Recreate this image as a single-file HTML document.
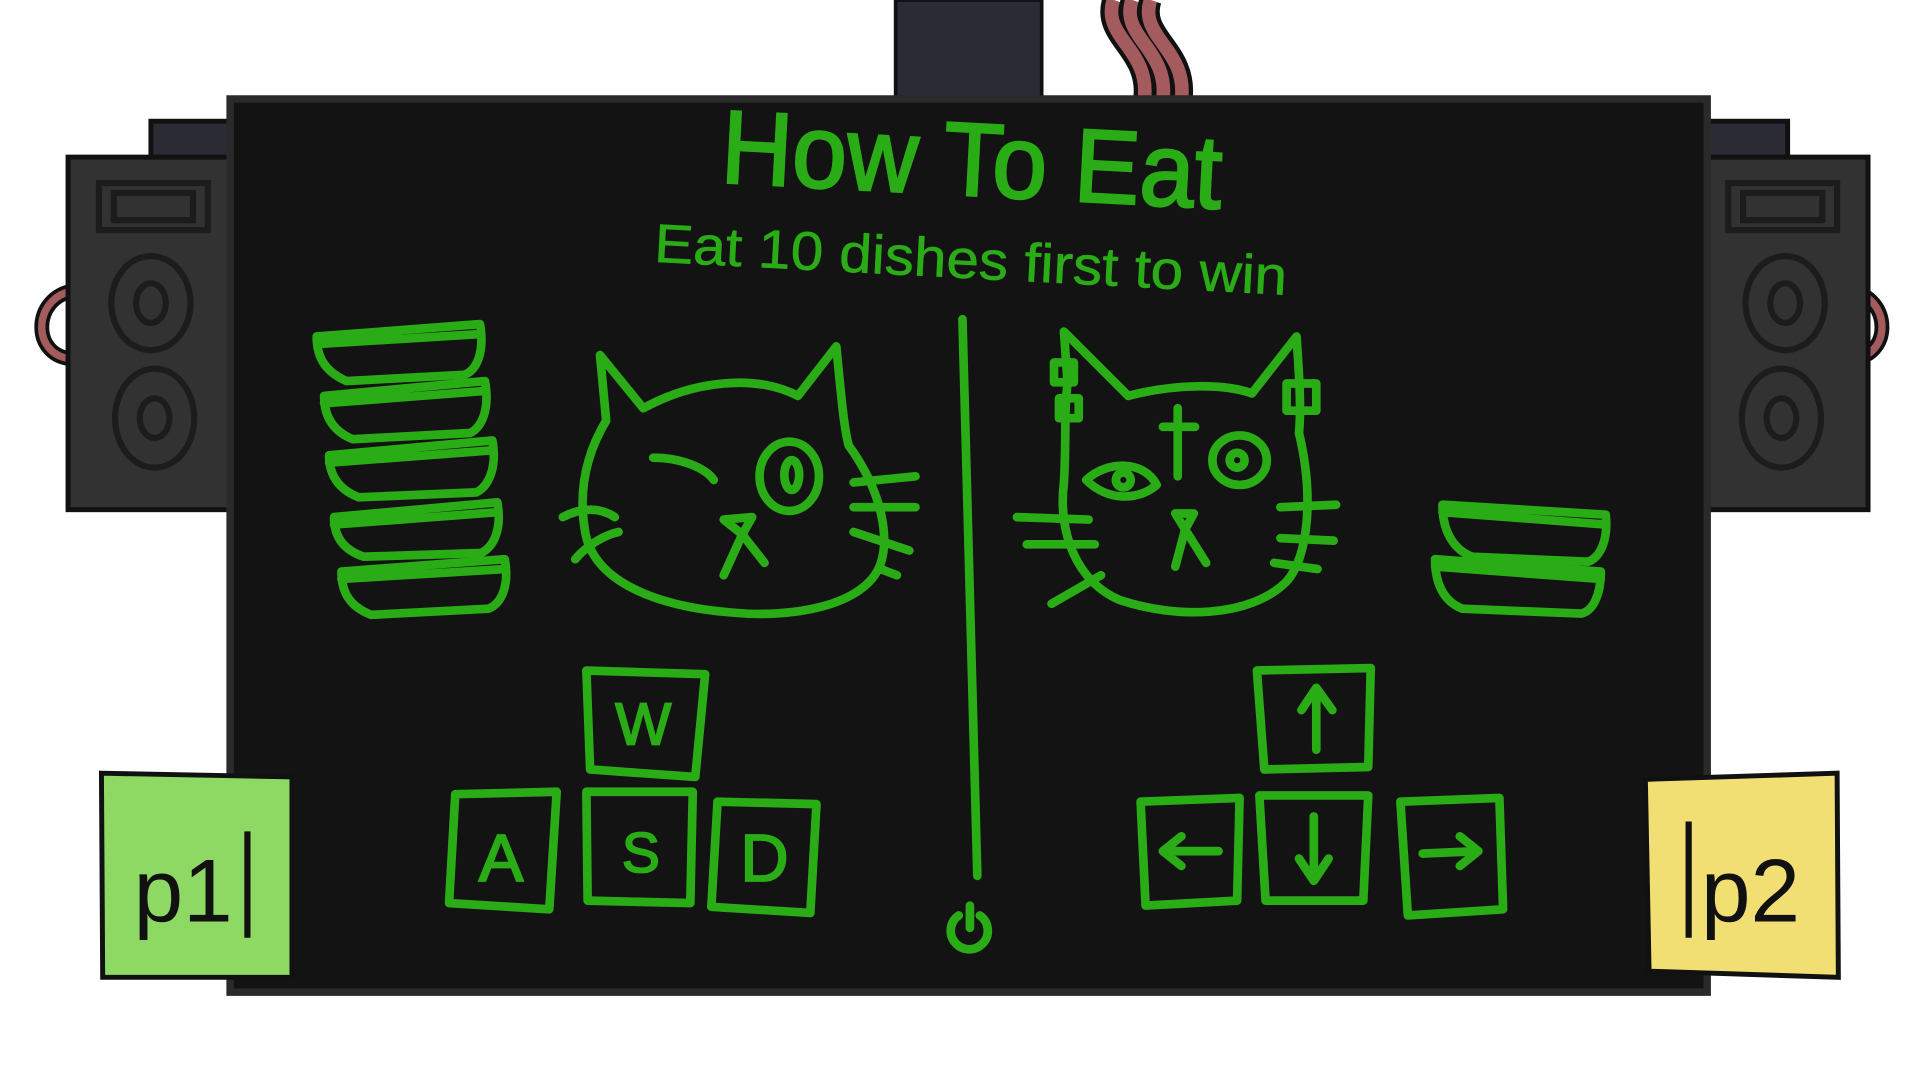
<!DOCTYPE html>
<html><head><meta charset="utf-8"><style>
html,body{margin:0;padding:0;background:#fff;width:1920px;height:1080px;overflow:hidden}
svg{display:block}
</style></head><body>
<svg width="1920" height="1080" viewBox="0 0 1552 873" preserveAspectRatio="none" xmlns="http://www.w3.org/2000/svg">
<rect width="1552" height="873" fill="#fff"/>
<rect x="724" y="0" width="118" height="80" fill="#2b2b36" stroke="#111" stroke-width="3"/>
<path d="M900 0 C890 30 930 40 925 80 M915 0 C905 30 945 40 940 80 M930 0 C920 30 960 40 955 80" stroke="#111" stroke-width="18" fill="none"/>
<path d="M900 0 C890 30 930 40 925 80 M915 0 C905 30 945 40 940 80 M930 0 C920 30 960 40 955 80" stroke="#a35b5e" stroke-width="11" fill="none"/>
<g stroke="#111" stroke-width="4">
<rect x="122" y="98" width="70" height="30" fill="#2b2b36"/>
<path d="M60 235 C25 240 25 290 60 290" fill="none" stroke="#111" stroke-width="12"/>
<path d="M60 235 C25 240 25 290 60 290" fill="none" stroke="#a35b5e" stroke-width="6"/>
<rect x="55" y="127" width="135" height="285" fill="#323232"/>
<rect x="1380" y="98" width="65" height="30" fill="#2b2b36"/>
<path d="M1495 235 C1530 240 1530 290 1495 290" fill="none" stroke="#111" stroke-width="12"/>
<path d="M1495 235 C1530 240 1530 290 1495 290" fill="none" stroke="#a35b5e" stroke-width="6"/>
<rect x="1380" y="127" width="130" height="285" fill="#323232"/>
</g>
<g fill="none" stroke="#1c1c1c" stroke-width="5">
<rect x="80" y="148" width="88" height="38"/><rect x="92" y="156" width="64" height="22"/>
<ellipse cx="122" cy="245" rx="32" ry="38"/><ellipse cx="122" cy="245" rx="12" ry="16"/>
<ellipse cx="125" cy="338" rx="32" ry="40"/><ellipse cx="125" cy="338" rx="12" ry="16"/>
<rect x="1397" y="148" width="88" height="38"/><rect x="1409" y="156" width="64" height="22"/>
<ellipse cx="1443" cy="245" rx="32" ry="38"/><ellipse cx="1443" cy="245" rx="12" ry="16"/>
<ellipse cx="1440" cy="338" rx="32" ry="40"/><ellipse cx="1440" cy="338" rx="12" ry="16"/>
</g>
<rect x="186" y="80" width="1194" height="722" fill="#131313" stroke="#2a2a2a" stroke-width="6"/>
<g fill="#2aac16" stroke="#2aac16" font-family="Liberation Sans Narrow, Liberation Sans, sans-serif">
<text x="582" y="158" font-size="84" stroke-width="2" textLength="405" lengthAdjust="spacingAndGlyphs" transform="rotate(3 785 150)">How To Eat</text>
<text x="528" y="225" font-size="44" stroke-width="0.5" textLength="512" lengthAdjust="spacingAndGlyphs" transform="rotate(3 785 225)">Eat 10 dishes first to win</text>
</g>
<g fill="none" stroke="#2aac16" stroke-width="7" stroke-linecap="round" stroke-linejoin="round">
<path d="M778 258 L790 708"/>
<path d="M775 740 A15 15 0 1 0 792 740 M784 732 L784 750"/>
<path d="M256 272 L388 262 C392 285 385 300 375 303 L280 308 C262 300 256 288 256 272Z M258 278 L388 270"/>
<path d="M262 320 L392 308 C396 330 390 345 380 350 L285 355 C268 348 262 335 262 320Z M262 326 L392 316"/>
<path d="M266 368 L398 356 C402 378 395 393 385 398 L290 402 C272 395 266 382 266 368Z M266 374 L398 364"/>
<path d="M270 418 L402 406 C406 428 399 442 389 447 L294 450 C276 444 270 432 270 418Z M270 424 L402 414"/>
<path d="M276 462 L408 452 C412 474 405 488 395 492 L300 497 C282 490 276 478 276 462Z M276 468 L408 460"/>
<path d="M1166 408 L1298 416 C1300 436 1294 450 1284 454 L1190 450 C1174 444 1166 428 1166 408Z M1166 414 L1298 424"/>
<path d="M1160 452 L1294 462 C1294 480 1288 494 1278 496 L1182 492 C1166 486 1160 470 1160 452Z M1160 458 L1294 468"/>
<path d="M485 287 L520 330 C560 308 610 302 645 320 L676 280 C680 320 682 345 686 360 C715 400 720 440 710 460 C695 490 640 500 590 495 C530 490 480 470 473 430 C466 390 478 360 490 340 Z"/>
<path d="M528 370 C550 370 570 378 577 388"/>
<ellipse cx="638" cy="385" rx="24" ry="28"/><ellipse cx="640" cy="384" rx="6" ry="12"/>
<path d="M585 420 L608 418 L600 432 Z M600 432 L585 465 M600 432 L618 455"/>
<path d="M455 418 C470 410 485 410 497 418 M465 452 C475 440 490 432 500 430 M690 390 L740 385 M690 410 L740 410 M690 430 L735 445 M712 460 L725 465"/>
<path d="M860 268 L912 320 C950 310 990 310 1012 318 L1048 272 C1050 300 1052 330 1050 350 C1062 400 1058 450 1040 470 C1010 500 950 500 905 485 C870 470 855 430 860 390 C862 360 860 330 863 310 Z"/>
<rect x="852" y="293" width="16" height="16"/><rect x="856" y="322" width="16" height="16"/><rect x="1040" y="310" width="24" height="22"/>
<path d="M952 330 L952 385 M940 345 L966 345"/>
<path d="M878 388 C895 372 925 372 935 392 C920 405 895 405 878 388Z"/><circle cx="908" cy="388" r="6"/>
<ellipse cx="1002" cy="372" rx="22" ry="20"/><circle cx="1000" cy="372" r="6"/>
<path d="M950 415 L965 415 L958 428 Z M958 428 L950 458 M958 428 L975 455"/>
<path d="M822 418 L880 420 M830 440 L885 440 M850 488 L890 465 M1035 410 L1080 408 M1035 435 L1078 437 M1030 455 L1065 460"/>
<path d="M474 542 L570 545 L562 628 L477 622 Z"/>
<path d="M368 642 L450 640 L444 735 L363 730 Z"/>
<path d="M474 640 L560 640 L558 730 L475 728 Z"/>
<path d="M580 648 L660 650 L655 738 L575 733 Z"/>
<path d="M1016 542 L1108 540 L1106 620 L1022 622 Z"/>
<path d="M922 648 L1002 645 L1000 728 L926 732 Z"/>
<path d="M1018 643 L1106 643 L1102 728 L1023 728 Z"/>
<path d="M1132 648 L1212 645 L1215 735 L1138 740 Z"/>
<path d="M1064 558 L1064 606 M1052 574 L1064 556 L1077 574"/>
<path d="M1062 660 L1062 710 M1050 694 L1062 712 L1074 694"/>
<path d="M940 688 L985 688 M955 676 L940 688 L955 700"/>
<path d="M1150 690 L1195 688 M1180 676 L1195 688 L1180 700"/>
</g>
<g fill="#2aac16" stroke="#2aac16" stroke-width="1.5" font-family="Liberation Sans, sans-serif" text-anchor="middle">
<text x="520" y="602" font-size="48">W</text>
<text x="405" y="712" font-size="54">A</text>
<text x="518" y="705" font-size="46">S</text>
<text x="618" y="712" font-size="54">D</text>
</g>
<path d="M82 625 L236 628 L236 790 L83 790 Z" fill="#8ed964" stroke="#111" stroke-width="4"/>
<path d="M1330 630 L1485 625 L1486 790 L1333 785 Z" fill="#f2df73" stroke="#111" stroke-width="4"/>
<g fill="#111" font-family="Liberation Sans Narrow, Liberation Sans, sans-serif">
<text x="108" y="745" font-size="72">p1</text>
<text x="1375" y="745" font-size="72">p2</text>
</g>
<path d="M200 672 L200 758 M1365 664 L1365 758" stroke="#111" stroke-width="5"/>
</svg>
</body></html>
